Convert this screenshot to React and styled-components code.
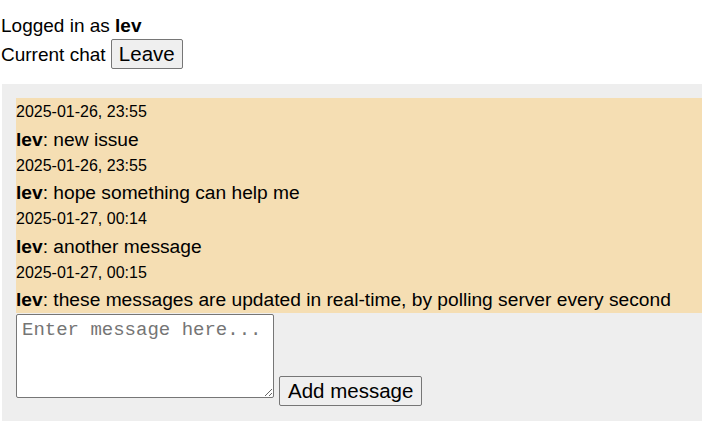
import React, { useState } from 'react';
import styled, { createGlobalStyle } from 'styled-components';

const Global = createGlobalStyle`
    body {
        margin: 0;
        padding: 0;
        font-family: "Liberation Sans", Arial, sans-serif;
        font-size: 19px;
        color: #000;
        background: #fff;
        overflow-x: hidden;
    }
`;

const Page = styled.div`
    padding: 15px 0 0 1px;
`;

const Line = styled.div`
    line-height: 21px;
    margin-top: ${(p) => p.$gap || 0}px;
`;

const Button = styled.button`
    font-family: "Liberation Sans", Arial, sans-serif;
    font-size: 20.5px;
    color: #000;
    background: #efefef;
    border: 1px solid #767676;
    border-radius: 2px;
    padding: 2px 7px;
    margin: 0;
`;

const ChatBox = styled.div`
    margin: 15px 0 0 1px;
    background: #eeeeee;
    padding: 14px 0 15px 14px;
`;

const Messages = styled.div`
    background: #f5deb3;
    padding: 1px 0 0 0;
`;

const Stamp = styled.div`
    font-size: 16px;
    line-height: 26.5px;
`;

const Text = styled.div`
    font-size: 19.2px;
    line-height: 27px;
`;

const Form = styled.form`
    margin: 0;
    line-height: 20px;
`;

const Input = styled.textarea`
    width: 258px;
    height: 84px;
    box-sizing: border-box;
    margin: 1px 0 0 0;
    padding: 4px 5px;
    font-family: "Liberation Mono", "DejaVu Sans Mono", monospace;
    font-size: 19px;
    border: 1px solid #767676;
    border-radius: 2px;
    resize: both;
    vertical-align: baseline;

    &::placeholder {
        color: #757575;
    }
`;

const AddButton = styled(Button)`
    margin-left: 5px;
    padding: 2px 8px;
`;

const messages = [
    { time: '2025-01-26, 23:55', user: 'lev', text: 'new issue' },
    { time: '2025-01-26, 23:55', user: 'lev', text: 'hope something can help me' },
    { time: '2025-01-27, 00:14', user: 'lev', text: 'another message' },
    { time: '2025-01-27, 00:15', user: 'lev', text: 'these messages are updated in real-time, by polling server every second' },
];

export default function App() {
    const [draft, setDraft] = useState('');

    const onSubmit = (evt) => {
        evt.preventDefault();
    }

    return (
        <Page>
            <Global />
            <Line>Logged in as <b>lev</b></Line>
            <Line $gap={3}>Current chat <Button type="button">Leave</Button></Line>
            <ChatBox>
                <Messages>
                    {messages.map((m, i) => (
                        <div key={i}>
                            <Stamp>{m.time}</Stamp>
                            <Text><b>{m.user}</b>: {m.text}</Text>
                        </div>
                    ))}
                </Messages>
                <Form onSubmit={onSubmit}>
                    <Input
                        placeholder="Enter message here..."
                        value={draft}
                        onChange={(e) => setDraft(e.target.value)}
                    />
                    <AddButton type="submit">Add message</AddButton>
                </Form>
            </ChatBox>
        </Page>
    );
}
